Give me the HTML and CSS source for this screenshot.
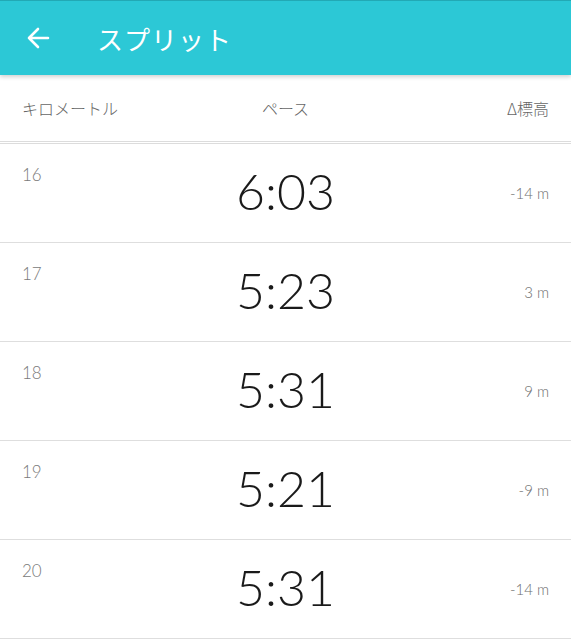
FILE: index.html
```html
<!DOCTYPE html>
<html>
<head>
  <meta charset="utf-8">
  <title>スプリット</title>
  <link rel="stylesheet" href="styles.css">
</head>
<body>
  <div class="app-bar">
    <svg class="back" width="24" height="24" viewBox="0 0 24 24">
      <path d="M22 12H3M12 3l-9 9 9 9" fill="none" stroke="#fff" stroke-width="2.6" stroke-linecap="round" stroke-linejoin="round"/>
    </svg>
    <h1>スプリット</h1>
  </div>

  <div class="col-head">
    <div class="c-km">キロメートル</div>
    <div class="c-pace">ペース</div>
    <div class="c-elev">Δ標高</div>
  </div>

  <div id="splits"></div>

  <script>
    var splits = [
      { km: 16, pace: "6:03", elev: "-14 m" },
      { km: 17, pace: "5:23", elev: "3 m" },
      { km: 18, pace: "5:31", elev: "9 m" },
      { km: 19, pace: "5:21", elev: "-9 m" },
      { km: 20, pace: "5:31", elev: "-14 m" }
    ];

    var list = document.getElementById("splits");
    splits.forEach(function (s) {
      var row = document.createElement("div");
      row.className = "split";
      row.innerHTML =
        '<div class="km">' + s.km + '</div>' +
        '<div class="pace">' + s.pace + '</div>' +
        '<div class="elev">' + s.elev + '</div>';
      list.appendChild(row);
    });
  </script>
</body>
</html>
```

FILE: styles.css
```css
body {
  margin: 0;
  padding: 0;
  background-color: #fff;
  font-family: Lato, "Noto Sans CJK JP", sans-serif;
}

.app-bar {
  height: 75px;
  background-color: #2cc8d6;
  border-top: 1px solid #22a9b5;
  box-sizing: border-box;
  display: flex;
  align-items: center;
  padding-left: 26px;
  box-shadow: 0 2px 4px rgba(0, 0, 0, 0.18);
  position: relative;
}

.app-bar .back {
  margin-right: 47px;
}

.app-bar h1 {
  margin: 0;
  color: #fff;
  font-family: Roboto, "Noto Sans CJK JP", sans-serif;
  font-size: 26px;
  font-weight: 400;
  letter-spacing: 1px;
}

.col-head {
  height: 66px;
  display: grid;
  grid-template-columns: 1fr auto 1fr;
  align-items: center;
  padding: 0 22px;
  font-family: "Noto Sans CJK JP", sans-serif;
  font-size: 16px;
  font-weight: 300;
  color: #666;
  border-bottom: 3px double #dcdcdc;
}

.c-pace {
  text-align: center;
}

.c-elev {
  text-align: right;
}

.split {
  height: 98px;
  display: grid;
  grid-template-columns: 1fr auto 1fr;
  align-items: center;
  padding: 0 22px;
  border-bottom: 1px solid #dedede;
}

.split .km {
  align-self: start;
  padding-top: 20px;
  font-size: 17px;
  font-weight: 300;
  color: #7a7a7a;
}

.split .pace {
  font-size: 50px;
  font-weight: 300;
  color: #1a1a1a;
  text-align: center;
  margin-top: -4px;
}

.split .elev {
  text-align: right;
  font-size: 15px;
  font-weight: 300;
  color: #6e6e6e;
}
```
